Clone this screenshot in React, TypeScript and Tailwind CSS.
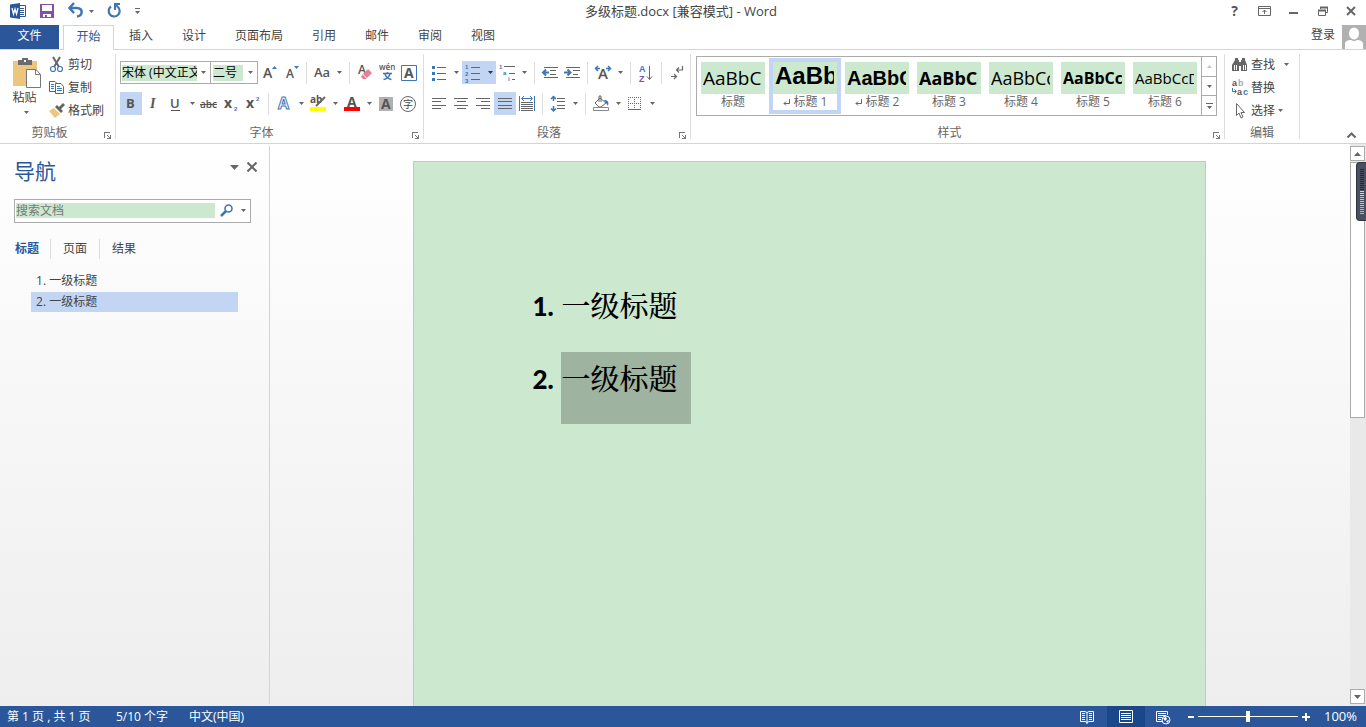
import { ReactNode } from "react";
import clsx from "clsx";

const tabs = ["插入", "设计", "页面布局", "引用", "邮件", "审阅", "视图"];

const styles = [
  { name: "标题", sample: "AaBbC", className: "text-[19px] leading-7" },
  { name: "标题 1", sample: "AaBbC", className: "text-[24px] leading-6 pb-1 font-bold font-['Liberation_Sans']", para: true, selected: true },
  { name: "标题 2", sample: "AaBbC", className: "text-[20px] leading-7 font-bold font-['Liberation_Sans']", para: true },
  { name: "标题 3", sample: "AaBbCc", className: "text-[18px] leading-7 font-bold" },
  { name: "标题 4", sample: "AaBbCc", className: "text-[18px] leading-7" },
  { name: "标题 5", sample: "AaBbCc", className: "text-[16px] leading-7 font-bold" },
  { name: "标题 6", sample: "AaBbCcD", className: "text-[15px] leading-7" },
];

const headings = ["一级标题", "一级标题"];

function Caret({ className = "fill-[#666]" }: { className?: string }) {
  return (
    <svg width="5" height="3" viewBox="0 0 5 3" className={clsx("shrink-0", className)}>
      <path d="M0 0h5L2.5 3z" />
    </svg>
  );
}

function Sep() {
  return (
    <div className="flex justify-center shrink-0 h-[22px] w-[9px]">
      <div className="w-px bg-[#dcdcdc]" />
    </div>
  );
}

function Tool({ label, caret, active, children }: { label: string; caret?: boolean; active?: boolean; children: ReactNode }) {
  return (
    <button
      aria-label={label}
      className={clsx("flex items-center shrink-0 h-[23px]", active && "bg-[#c2d5f2]")}
    >
      <span className="flex w-[22px] justify-center">{children}</span>
      {caret && (
        <span className="flex w-3 justify-center">
          <Caret className={active ? "fill-[#333]" : "fill-[#666]"} />
        </span>
      )}
    </button>
  );
}

function Icon({ children }: { children: ReactNode }) {
  return (
    <svg width="16" height="16" viewBox="0 0 16 16" fill="none" className="shrink-0 overflow-visible">
      {children}
    </svg>
  );
}

function Group({ title, launcher = true, className, children }: { title: string; launcher?: boolean; className?: string; children: ReactNode }) {
  return (
    <section className={clsx("flex shrink-0 pt-[3px]", className)}>
      <div className="flex flex-col flex-1">
        <div className="h-[72px]">{children}</div>
        <div className="flex items-center h-4">
          <h2 className="flex-1 text-center text-[#666] leading-4">{title}</h2>
          {launcher && (
            <button aria-label={`${title}设置`} className="mt-1 ml-[5px] mr-1">
              <svg width="7" height="7" viewBox="0 0 7 7" fill="none" stroke="#777" shapeRendering="crispEdges">
                <path d="M.5 6V.5H6M3 3l3 3M6.5 3v3.5H3" />
              </svg>
            </button>
          )}
        </div>
      </div>
      <div className="w-px mt-px mb-1 bg-[#dcdcdc]" />
    </section>
  );
}

function Letter({ x, y, size, fill = "#555", weight = 700, children }: { x: number; y: number; size: number; fill?: string; weight?: number; children: string }) {
  return (
    <text x={x} y={y} fontSize={size} fill={fill} fontWeight={weight} className="font-['Open_Sans']">
      {children}
    </text>
  );
}

// small marks inside list and find/replace icons
function Mark({ x, y, size = 6, fill = "#3f76b5", children }: { x: number; y: number; size?: number; fill?: string; children: string }) {
  return (
    <text x={x} y={y} fontSize={size} fill={fill} fontWeight={700} className="font-['Liberation_Sans']">
      {children}
    </text>
  );
}

function TitleBar() {
  return (
    <header className="grid grid-cols-[1fr_auto_1fr] items-center h-[25px] pb-[3px]">
      <div className="flex items-center pl-[10px]">
        <Icon>
          <path d="M9 2.5h6.5v11H9" fill="#fff" stroke="#2b579a" />
          <path d="M10 5.5h4M10 7.5h4M10 9.5h4M10 11.5h4" stroke="#2b579a" />
          <path d="M0 1.5L10 0v16L0 14.5z" fill="#2b579a" />
          <path d="M2 5l1.5 6L5 6l1.5 5L8 5" stroke="#fff" strokeWidth="1.3" />
        </Icon>
        <button aria-label="保存" className="ml-[14px]">
          <svg width="14" height="14" viewBox="0 0 14 14" fill="#8551a5">
            <path fillRule="evenodd" d="M0 0h14v14H0zM2 1v6h10V1zM3 10v3h2v-2h2v2h4v-3z" />
          </svg>
        </button>
        <button aria-label="撤消" className="flex items-center ml-[14px] gap-[5px]">
          <Icon>
            <path d="M6 0L1.500 5 6 10" stroke="#3f76b5" strokeWidth="2.500" />
            <path d="M2 5h7c6.500 0 6 8 0 8.500" stroke="#3f76b5" strokeWidth="2.500" />
          </Icon>
          <Caret />
        </button>
        <button aria-label="恢复" className="ml-3">
          <Icon>
            <path d="M5 3.500A5.500 5.500 0 1 0 12 4" stroke="#3f76b5" strokeWidth="2.200" />
            <path d="M8 0h6v2h-2.500L13 4l-2 1-1-2v4H8z" fill="#3f76b5" />
          </Icon>
        </button>
        <button aria-label="自定义快速访问工具栏" className="ml-[13px]">
          <svg width="5" height="7" viewBox="0 0 5 7" fill="#666">
            <path d="M0 0h5v1H0zM0 3h5L2.500 6z" />
          </svg>
        </button>
      </div>
      <h1 className="text-[#444] text-[13px] leading-4 pr-1">多级标题.docx [兼容模式] - Word</h1>
      <div className="flex justify-end pr-px">
        <button aria-label="帮助" className="flex w-[29px] justify-center text-[14px] leading-4 font-bold text-[#555]">?</button>
        <button aria-label="功能区显示选项" className="flex w-[29px] justify-center">
          <Icon>
            <path d="M2.500 3.500h12v9h-12zM2.500 5.500h12M8.500 11V7M6.500 9l2-2 2 2" stroke="#666" />
          </Icon>
        </button>
        <button aria-label="最小化" className="flex w-[29px] justify-center">
          <Icon><path d="M4 9h9v2H4z" fill="#666" /></Icon>
        </button>
        <button aria-label="还原" className="flex w-[29px] justify-center">
          <Icon>
            <path d="M6.500 6V4.500h7v5H12" stroke="#666" />
            <path d="M6 4.500h8M4 7.500h8" stroke="#666" strokeWidth="2" />
            <path d="M4.500 7.500h7v5h-7z" stroke="#666" />
          </Icon>
        </button>
        <button aria-label="关闭" className="flex w-[29px] justify-center">
          <Icon><path d="M4 4l8 8M12 4l-8 8" stroke="#666" strokeWidth="2" /></Icon>
        </button>
      </div>
    </header>
  );
}

function TabBar() {
  return (
    <nav className="flex h-[25px] border-b border-[#d4d4d4] text-[#444]">
      <button className="w-[59px] pb-0.5 bg-[#2b579a] text-white">文件</button>
      <button className="w-[51px] h-[25px] ml-1 pb-[3px] border border-b-0 border-[#d4d4d4] bg-white text-[#2b579a]">开始</button>
      {tabs.map((tab) => (
        <button key={tab} className="px-[14px] ml-px pb-0.5">{tab}</button>
      ))}
      <div className="flex-1" />
      <button className="mr-[7px] pb-1">登录</button>
      <svg width="24" height="24" viewBox="0 0 24 24">
        <path d="M0 0h24v24H0z" fill="#b1b1b1" />
        <ellipse cx="12" cy="8.500" rx="5" ry="6" fill="#fff" />
        <path d="M3 24v-5c0-3 3-4 6-4 2 1.500 4 1.500 6 0 3 0 6 1 6 4v5z" fill="#fff" />
      </svg>
    </nav>
  );
}

function Clipboard() {
  return (
    <Group title="剪贴板" className="w-[116px]">
      <div className="flex">
        <button className="flex flex-col items-center w-[49px] pt-[5px] text-[#444]">
          <svg width="28" height="31" viewBox="0 0 28 31" fill="none" className="ml-1">
            <path d="M0 3h24v25H0z" fill="#ecc57e" />
            <path d="M5 2h4V0h6v2h4v5H5z" fill="#6b6b6b" />
            <path d="M11 2h2v2h-2z" fill="#fff" />
            <path d="M13.500 11.500H23l4.500 5v13h-14z" fill="#fff" stroke="#777" />
            <path d="M22.500 11.500v5h5" stroke="#777" />
          </svg>
          <span className="leading-4 pt-px">粘贴</span>
          <span className="mt-[5px] ml-[3px]"><Caret /></span>
        </button>
        <div className="text-[#444]">
          <button className="flex items-center gap-[3px] h-[23px]">
            <Icon>
              <path d="M4 0l6 10M11 0L5 10" stroke="#666" strokeWidth="2" />
              <circle cx="4" cy="12" r="2.500" stroke="#3f76b5" strokeWidth="1.200" />
              <circle cx="11" cy="12" r="2.500" stroke="#3f76b5" strokeWidth="1.200" />
            </Icon>
            剪切
          </button>
          <button className="flex items-center gap-[3px] h-[23px]">
            <Icon>
              <path d="M.5 1.500H6l2 2v8H.5z" stroke="#666" />
              <path d="M2 4.500h3M2 6.500h3M2 8.500h3" stroke="#3f76b5" />
              <path d="M6.500 3.500H12l2.500 3v7h-8z" fill="#fff" stroke="#666" />
              <path d="M8 6.500h3M8 8.500h5M8 10.500h5" stroke="#3f76b5" />
            </Icon>
            复制
          </button>
          <button className="flex items-center gap-[3px] h-[23px]">
            <Icon>
              <path d="M0 8l5-3 6 6-5 4z" fill="#ecc57e" />
              <path d="M6 4l2-2 2 2 4-4 2 2-4 4 2 2-2 2z" fill="#666" />
            </Icon>
            格式刷
          </button>
        </div>
      </div>
    </Group>
  );
}

function FontGroup() {
  return (
    <Group title="字体" className="w-[308px]">
      <div className="flex items-center pl-1 pt-2">
        <div className="flex items-center w-[91px] h-[23px] border border-[#ababab] pl-px">
          <select aria-label="字体" className="appearance-none w-[75px] h-4 bg-[#cce8cf] text-black leading-4 overflow-hidden text-clip whitespace-nowrap">
            <option>宋体 (中文正文)</option>
          </select>
          <span className="flex flex-1 justify-center"><Caret /></span>
        </div>
        <div className="flex items-center w-[47px] h-[23px] border border-l-0 border-[#ababab] pl-[2px]">
          <select aria-label="字号" className="appearance-none w-[30px] h-4 bg-[#cce8cf] text-black leading-4">
            <option>二号</option>
          </select>
          <span className="flex flex-1 justify-center"><Caret /></span>
        </div>
        <Tool label="增大字号">
          <Icon>
            <Letter x={2} y={13} size={14} weight={600}>A</Letter>
            <path d="M11 4l2.500-3L16 4z" fill="#3f76b5" />
          </Icon>
        </Tool>
        <Tool label="减小字号">
          <Icon>
            <Letter x={3} y={13} size={12} weight={600}>A</Letter>
            <path d="M11 1h5l-2.500 3z" fill="#3f76b5" />
          </Icon>
        </Tool>
        <Sep />
        <Tool label="更改大小写" caret>
          <Icon><Letter x={0} y={12} size={13} weight={600}>Aa</Letter></Icon>
        </Tool>
        <Sep />
        <Tool label="清除所有格式">
          <Icon>
            <Letter x={1} y={9} size={12} weight={600}>A</Letter>
            <path d="M5 10l6-6 4 4-6 6H6l-2-2z" fill="#e48195" />
            <path d="M5 8.500l5 5" stroke="#fff" />
          </Icon>
        </Tool>
        <Tool label="拼音指南">
          <Icon>
            <Letter x={0} y={5} size={8} weight={600}>wén</Letter>
            <path d="M4 8.500h9M8.500 7v1.500M6 9c1 3 3 5 6.500 5.500M11 9c-1 3-3 5-6.500 5.500" stroke="#3f76b5" strokeWidth="1.500" />
          </Icon>
        </Tool>
        <Tool label="字符边框">
          <Icon>
            <path d="M.5.5h15v15H.5z" stroke="#3f76b5" />
            <Letter x={3} y={13} size={14}>A</Letter>
          </Icon>
        </Tool>
      </div>
      <div className="flex items-center pl-1 pt-2">
        <Tool label="加粗" active>
          <Icon><Letter x={3} y={12} size={13}>B</Letter></Icon>
        </Tool>
        <Tool label="倾斜">
          <Icon>
            <text x="5" y="12" fontSize="14" fontStyle="italic" fontWeight="700" fill="#555" className="font-['Liberation_Serif']">I</text>
          </Icon>
        </Tool>
        <Tool label="下划线" caret>
          <Icon>
            <Letter x={3} y={12} size={13} weight={600}>U</Letter>
            <path d="M4 14.500h9" stroke="#555" />
          </Icon>
        </Tool>
        <Tool label="删除线">
          <Icon>
            <Letter x={-1} y={12} size={10} weight={600}>abc</Letter>
            <path d="M-1 8.500h17" stroke="#555" />
          </Icon>
        </Tool>
        <Tool label="下标">
          <Icon>
            <Letter x={1} y={12} size={14}>x</Letter>
            <Mark x={11} y={15}>2</Mark>
          </Icon>
        </Tool>
        <Tool label="上标">
          <Icon>
            <Letter x={1} y={12} size={14}>x</Letter>
            <Mark x={11} y={5}>2</Mark>
          </Icon>
        </Tool>
        <Sep />
        <Tool label="文本效果" caret>
          <Icon>
            <text x="2" y="13" fontSize="16" fontWeight="700" fill="#fff" stroke="#3f76b5" className="font-['Open_Sans']">A</text>
          </Icon>
        </Tool>
        <Tool label="突出显示" caret>
          <Icon>
            <Letter x={0} y={7} size={10}>ab</Letter>
            <path d="M15 1L8 8l-2 2" stroke="#666" strokeWidth="2" />
            <path d="M0 11h16v4H0z" fill="#ff0" />
          </Icon>
        </Tool>
        <Tool label="字体颜色" caret>
          <Icon>
            <Letter x={3} y={11} size={14}>A</Letter>
            <path d="M0 11h16v4H0z" fill="#f00" />
          </Icon>
        </Tool>
        <Tool label="字符底纹">
          <Icon>
            <path d="M1 1h14v14H1z" fill="#b1b1b1" />
            <Letter x={3} y={13} size={14}>A</Letter>
          </Icon>
        </Tool>
        <Tool label="带圈字符">
          <Icon>
            <circle cx="8" cy="8" r="7.500" stroke="#666" />
            <text x="3" y="12" fontSize="10" fill="#444" className="font-['Noto_Sans_CJK_SC']">字</text>
          </Icon>
        </Tool>
      </div>
    </Group>
  );
}

function Lines({ d }: { d: string }) {
  return <Icon><path d={d} stroke="#666" /></Icon>;
}

function ParagraphGroup() {
  return (
    <Group title="段落" className="w-[267px]">
      <div className="flex items-center pl-1 pt-2">
        <Tool label="项目符号" caret>
          <Icon>
            <path d="M1 1h3v3H1zM1 7h3v3H1zM1 13h3v3H1z" fill="#3f76b5" />
            <path d="M6 2.500h9M6 8.500h9M6 14.500h9" stroke="#666" />
          </Icon>
        </Tool>
        <Tool label="编号" caret active>
          <Icon>
            <Mark x={0} y={4}>1</Mark>
            <Mark x={0} y={11}>2</Mark>
            <Mark x={0} y={18}>3</Mark>
            <path d="M6 2.500h9M6 8.500h9M6 14.500h9" stroke="#666" />
          </Icon>
        </Tool>
        <Tool label="多级列表" caret>
          <Icon>
            <Mark x={0} y={4}>1</Mark>
            <Mark x={4} y={10}>a</Mark>
            <Mark x={9} y={16}>i</Mark>
            <path d="M5 1.500h11M10 8.500h6M13 14.500h3" stroke="#666" />
          </Icon>
        </Tool>
        <Sep />
        <Tool label="减少缩进量">
          <Icon>
            <path d="M2 2.500h14M8 5.500h6M8 9.500h6M2 12.500h14" stroke="#666" />
            <path d="M7 7.500H1M4 4.500l-3 3 3 3" stroke="#3f76b5" strokeWidth="2" />
          </Icon>
        </Tool>
        <Tool label="增加缩进量">
          <Icon>
            <path d="M2 2.500h14M9 5.500h7M9 9.500h5M2 12.500h14" stroke="#666" />
            <path d="M0 7.500h6M3.500 4.500l3 3-3 3" stroke="#3f76b5" strokeWidth="2" />
          </Icon>
        </Tool>
        <Sep />
        <Tool label="中文版式" caret>
          <Icon>
            <Letter x={3} y={14} size={15} weight={600}>A</Letter>
            <path d="M5 3.500H1M3 1L.5 3.500 3 6M11 3.500h4M13 1l2.500 2.500L13 6" stroke="#3f76b5" strokeWidth="1.500" />
          </Icon>
        </Tool>
        <Sep />
        <Tool label="排序">
          <Icon>
            <Mark x={1} y={7} size={9}>A</Mark>
            <Mark x={1} y={17} size={9} fill="#8551a5">Z</Mark>
            <path d="M11.500 1v13M9 11.500l2.500 3 2.500-3" stroke="#666" />
          </Icon>
        </Tool>
        <Sep />
        <Tool label="显示编辑标记">
          <Icon>
            <path d="M13.500 1v4H8M10 2.500L7.500 5 10 7.500M2 11.500h5M5 9l2.500 2.500L5 14" stroke="#666" strokeWidth="1.200" />
          </Icon>
        </Tool>
      </div>
      <div className="flex items-center pl-1 pt-2">
        <Tool label="左对齐"><Lines d="M1 2.500h14M1 5.500h9M1 9.500h14M1 12.500h9" /></Tool>
        <Tool label="居中"><Lines d="M1 2.500h14M4 5.500h9M1 9.500h14M4 12.500h9" /></Tool>
        <Tool label="右对齐"><Lines d="M1 2.500h14M6 5.500h9M1 9.500h14M6 12.500h9" /></Tool>
        <Tool label="两端对齐" active><Lines d="M1 2.500h14M1 5.500h14M1 9.500h14M1 12.500h14" /></Tool>
        <Tool label="分散对齐">
          <Icon>
            <path d="M.5 0v15M15.500 0v15M3 2.500h10M5 0L2.500 2.500 5 5M11 0l2.500 2.500L11 5" stroke="#3f76b5" />
            <path d="M2 6.500h12M2 8.500h12M2 10.500h12M2 12.500h12M2 14.500h12" stroke="#666" />
          </Icon>
        </Tool>
        <Sep />
        <Tool label="行和段落间距" caret>
          <Icon>
            <path d="M3.500 0v5M3.500 10v5M1 3L3.500.5 6 3M1 12.500L3.500 15 6 12.500" stroke="#3f76b5" strokeWidth="1.500" />
            <path d="M7 2.500h8M7 5.500h8M7 9.500h8M7 12.500h8" stroke="#666" />
          </Icon>
        </Tool>
        <Sep />
        <Tool label="底纹" caret>
          <Icon>
            <path d="M7 2l6 5-5 4H6L2 7zM6 6V0h2v6" fill="#fff" stroke="#666" />
            <path d="M11 4c4 0 5 2 4 6l-2-3z" fill="#3f76b5" />
            <path d="M.5 11.500h15v3H.5z" fill="#fff" stroke="#888" />
          </Icon>
        </Tool>
        <Tool label="边框" caret>
          <Icon>
            <path d="M1 1.500h13M1 7.500h13M1.500 1v12M7.500 1v12M13.500 1v12" stroke="#666" strokeDasharray="1 1" />
            <path d="M1 13.500h13" stroke="#666" />
          </Icon>
        </Tool>
      </div>
    </Group>
  );
}

function StylesGroup() {
  return (
    <Group title="样式" className="w-[534px]">
      <div className="pt-[3px] pl-[5px]">
        <div className="flex w-[521px] h-[60px] border border-[#ababab]">
          <div className="flex flex-1">
            {styles.map((style) => (
              <button
                key={style.name}
                className={clsx(
                  "w-[72px] h-[56px] mt-px border-4 text-center",
                  style.selected ? "border-[#c2d5f2]" : "border-transparent",
                )}
              >
                <span className="flex items-center h-8 bg-[#cce8cf] pl-[2px] pr-[3px]">
                  <span className={clsx("flex-1 overflow-hidden whitespace-nowrap text-left text-black", style.className)}>
                    {style.sample}
                  </span>
                </span>
                <span className="flex justify-center items-center gap-1 leading-4 text-[#666]">
                  {style.para && (
                    <svg width="7" height="7" viewBox="0 0 7 7" fill="none" stroke="#666">
                      <path d="M6.500 0v4.500H1M3 2.500l-2 2 2 2" />
                    </svg>
                  )}
                  {style.name}
                </span>
              </button>
            ))}
          </div>
          <div className="flex flex-col w-[15px] border-l border-[#ababab]">
            <button aria-label="上一行" className="flex flex-1 items-center justify-center">
              <svg width="5" height="3" viewBox="0 0 5 3" fill="#c4c4c4"><path d="M0 3h5L2.500 0z" /></svg>
            </button>
            <button aria-label="下一行" className="flex flex-1 items-center justify-center border-y border-[#ababab]"><Caret /></button>
            <button aria-label="其他" className="flex flex-1 items-center justify-center">
              <svg width="7" height="6" viewBox="0 0 7 6" fill="#666"><path d="M0 0h7v1H0zM1 3h5L3.500 6z" /></svg>
            </button>
          </div>
        </div>
      </div>
    </Group>
  );
}

function EditGroup() {
  return (
    <Group title="编辑" launcher={false} className="w-[75px]">
      <div className="flex flex-col pl-[7px] text-[#444]">
        <button className="flex items-center gap-[3px] h-[23px]">
          <Icon>
            <path d="M3 1h3v2h1v2h2V3h1V1h3v2l2 5v6H9V9H7v5H0V8l3-5z" fill="#666" />
            <path d="M2.500 8v5M4.500 8v5M11.500 8v5M13.500 8v5" stroke="#fff" />
          </Icon>
          查找
          <span className="ml-[6px]"><Caret /></span>
        </button>
        <button className="flex items-center gap-[3px] h-[23px]">
          <Icon>
            <Mark x={0} y={6} size={9} fill="#555">a</Mark>
            <Mark x={6} y={6} size={9} fill="#aaa">b</Mark>
            <Mark x={5} y={15} size={9} fill="#555">a</Mark>
            <Mark x={11} y={15} size={9}>c</Mark>
            <path d="M.5 8v3.500H4M2.500 9.500l2 2-2 2" stroke="#3f76b5" />
          </Icon>
          替换
        </button>
        <button className="flex items-center gap-[3px] h-[23px]">
          <Icon>
            <path d="M4.500.5v12L7 10l2 5 2-1-2-4.500h3.500z" fill="#fff" stroke="#666" />
          </Icon>
          选择
          <Caret />
        </button>
      </div>
    </Group>
  );
}

function Navigation() {
  return (
    <aside className="flex flex-col w-[270px] shrink-0 border-r border-[#d4d4d4] mt-[2px] mb-[2px] text-[#444]">
      <div className="flex items-start pl-[14px] pr-[12px] pt-[10px]">
        <h2 className="flex-1 text-[21px] leading-[30px] text-[#2b579a]">导航</h2>
        <button aria-label="任务窗格选项" className="mt-[9px]">
          <svg width="9" height="5" viewBox="0 0 9 5" fill="#666"><path d="M0 0h9L4.500 5z" /></svg>
        </button>
        <button aria-label="关闭导航" className="mt-[6px] ml-2">
          <svg width="10" height="10" viewBox="0 0 10 10" stroke="#666" strokeWidth="2"><path d="M.5.5l9 9M9.500.5l-9 9" /></svg>
        </button>
      </div>
      <div className="flex items-center h-6 mt-[13px] ml-[14px] mr-[18px] pb-px border border-[#ababab] bg-white pl-px">
        <input
          type="text"
          aria-label="搜索文档"
          placeholder="搜索文档"
          className="flex-1 min-w-0 h-[15px] bg-[#cce8cf] leading-[15px] placeholder:text-[#777]"
        />
        <button aria-label="搜索" className="ml-[5px]">
          <svg width="13" height="13" viewBox="0 0 13 13" fill="none" stroke="#3f76b5">
            <circle cx="8.500" cy="4.500" r="3.500" strokeWidth="1.600" />
            <path d="M6 7l-5 5" strokeWidth="2.500" />
          </svg>
        </button>
        <span className="ml-2 mr-1"><Caret /></span>
      </div>
      <div className="flex h-5 mt-4 pl-[3px] leading-5">
        <button className="px-3 font-bold text-[#2b579a] border-r border-[#dcdcdc] pr-[11px]">标题</button>
        <button className="px-3 border-r border-[#dcdcdc]">页面</button>
        <button className="px-3">结果</button>
      </div>
      <ol className="mt-[12px] ml-[31px] mr-[31px]">
        {headings.map((heading, index) => (
          <li key={index} className={clsx("h-5 mb-px pl-[5px] leading-5", index === 1 && "bg-[#c2d5f2]")}>
            {index + 1}. {heading}
          </li>
        ))}
      </ol>
    </aside>
  );
}

function Document() {
  return (
    <main className="flex-1 flex justify-center pt-[17px] pr-0.5 overflow-hidden">
      <article className="w-[793px] border border-b-0 border-[#b9cfbb] bg-[#cce8cf] pt-[116px] pl-[119px] text-black">
        {headings.map((heading, index) => (
          <h3 key={index} className="flex h-[73px] pt-px text-[29px] leading-[52px]">
            <span className="w-7 text-[26px] leading-[54px] font-black font-['Lato']">{index + 1}.</span>
            <span className={clsx("h-[72px] pl-px pr-[13px] font-medium font-['Noto_Serif_CJK_SC','Noto_Sans_CJK_SC',serif]", index === 1 && "bg-[#9eb3a0]")}>
              {heading}
            </span>
          </h3>
        ))}
      </article>
    </main>
  );
}

function Scrollbar() {
  return (
    <div className="relative flex flex-col w-4 shrink-0 pt-[2px] pb-[2px] pr-px bg-[#e9e9e9]">
      <button aria-label="向上滚动" className="flex items-center justify-center h-[15px] border border-[#ababab] bg-white">
        <svg width="7" height="4" viewBox="0 0 7 4" fill="#666"><path d="M0 4h7L3.500 0z" /></svg>
      </button>
      <div className="mt-px h-64 border border-[#ababab] bg-white" />
      <div className="flex-1" />
      <button aria-label="向下滚动" className="flex items-center justify-center h-[15px] border border-[#ababab] bg-white">
        <svg width="7" height="4" viewBox="0 0 7 4" fill="#666"><path d="M0 0h7L3.500 4z" /></svg>
      </button>
      <div className="absolute right-0 top-[18px] flex justify-end w-[10px] h-[59px] pt-[6px] pr-[2px] rounded-l border border-r-0 border-[#30343f] bg-[#4b5060]">
        <svg width="4" height="46" viewBox="0 0 4 46">
          <path d="M2 0v22" stroke="#252830" strokeWidth="4" strokeDasharray="1 1" />
          <path d="M2 22v6" stroke="#dede86" strokeWidth="4" strokeDasharray="1 1" />
          <path d="M2 28v10" stroke="#a5dba0" strokeWidth="4" strokeDasharray="1 1" />
          <path d="M2 38v8" stroke="#6fd6cf" strokeWidth="4" strokeDasharray="1 1" />
        </svg>
      </div>
    </div>
  );
}

function StatusBar() {
  return (
    <footer className="flex items-center h-[21px] bg-[#2b579a] text-white pl-[7px] pr-[9px]">
      <span className="w-[109px]">第 1 页 , 共 1 页</span>
      <span className="w-[73px]">5/10 个字</span>
      <span>中文(中国)</span>
      <div className="flex-1" />
      <button aria-label="阅读视图" className="flex justify-center w-[38px]">
        <Icon>
          <path d="M.5 2.500H5l2 1 2-1h4.500v10H9l-2 1-2-1H.5zM7 3v12" stroke="#fff" />
          <path d="M2 4.500h3M2 6.500h3M2 8.500h3M2 10.500h3M9 4.500h3M9 6.500h3M9 8.500h3M9 10.500h3" stroke="#fff" />
        </Icon>
      </button>
      <button aria-label="页面视图" className="flex items-center justify-center w-[38px] h-[21px] bg-[#19478a]">
        <Icon>
          <path d="M1.500 1.500h13v12h-13zM3 4.500h10M3 6.500h10M3 8.500h10M3 10.500h10" stroke="#fff" />
        </Icon>
      </button>
      <button aria-label="Web 版式视图" className="flex justify-center w-[38px]">
        <Icon>
          <path d="M6 12.500H.5v-10h11V6M2 4.500h8M2 6.500h8M2 8.500h4M2 10.500h3" stroke="#fff" />
          <circle cx="10" cy="11" r="4" fill="#2b579a" stroke="#fff" />
          <path d="M7 9l3-1 1 2-2 2zM10 12l3-1-1 3z" fill="#fff" />
        </Icon>
      </button>
      <button aria-label="缩小" className="ml-[5px] mr-1"><svg width="6" height="2" viewBox="0 0 6 2"><path d="M0 0h6v2H0z" fill="#fff" /></svg></button>
      <input
        type="range"
        aria-label="显示比例"
        defaultValue={50}
        className="appearance-none w-[100px] h-[11px] bg-transparent [&::-webkit-slider-runnable-track]:h-px [&::-webkit-slider-runnable-track]:bg-white [&::-webkit-slider-thumb]:appearance-none [&::-webkit-slider-thumb]:w-1 [&::-webkit-slider-thumb]:h-[11px] [&::-webkit-slider-thumb]:-mt-[5px] [&::-webkit-slider-thumb]:bg-white"
      />
      <button aria-label="放大" className="ml-1"><svg width="8" height="8" viewBox="0 0 8 8"><path d="M0 3h3V0h2v3h3v2H5v3H3V5H0z" fill="#fff" /></svg></button>
      <span className="w-[47px] text-right text-[13px]">100%</span>
    </footer>
  );
}

export default function App() {
  return (
    <div className="flex flex-col h-screen overflow-hidden bg-white text-xs font-['Open_Sans','Noto_Sans_CJK_SC',sans-serif]">
      <TitleBar />
      <TabBar />
      <div className="flex h-[94px] border-b border-[#d4d4d4]">
        <Clipboard />
        <FontGroup />
        <ParagraphGroup />
        <StylesGroup />
        <EditGroup />
        <div className="flex flex-1 items-end justify-end pr-[10px] pb-[5px]">
          <button aria-label="折叠功能区">
            <svg width="9" height="6" viewBox="0 0 9 6" fill="none" stroke="#666" strokeWidth="2"><path d="M.5 5.500l4-4 4 4" /></svg>
          </button>
        </div>
      </div>
      <div className="flex flex-1 min-h-0 bg-linear-to-b from-white to-[#eeeeee]">
        <Navigation />
        <Document />
        <Scrollbar />
      </div>
      <StatusBar />
    </div>
  );
}
